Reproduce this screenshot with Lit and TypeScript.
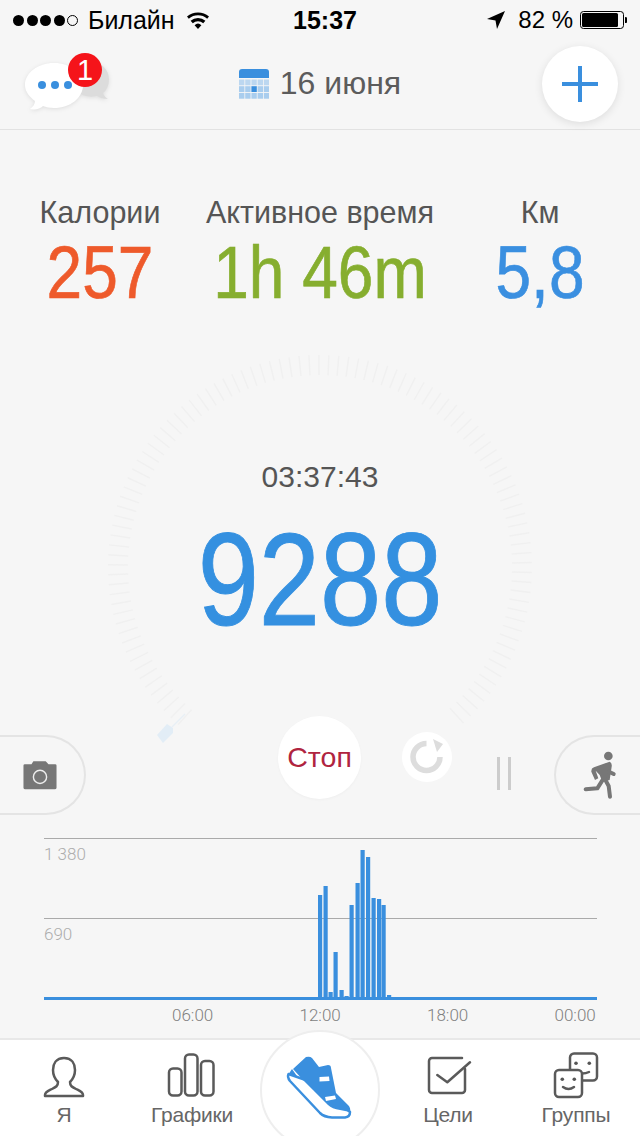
import { LitElement, html, css, svg } from "lit";
import { customElement } from "lit/decorators.js";

const BAR_TOPS = [895, 886, 992, 952, 990, 996, 905, 883, 850, 857, 898, 899, 905, 995];
const BAR_X = [318, 323.5, 328.5, 333.5, 339.5, 344.5, 349.5, 355.5, 360.5, 366, 371.5, 377, 381.5, 387];

const ticks = () => {
  const out = [];
  for (let a = -138; a <= 138; a += 2.7) {
    const r = (a * Math.PI) / 180;
    const s = Math.sin(r), c = Math.cos(r);
    out.push(svg`<line x1=${220 + 192 * s} y1=${220 - 192 * c} x2=${220 + 212 * s} y2=${220 - 212 * c}></line>`);
  }
  return out;
};

@customElement("app-root")
export class AppRoot extends LitElement {
  static styles = css`
    :host { display: block; width: 640px; height: 1136px; overflow: hidden; background: #f6f6f6; font-family: "Liberation Sans", Arial, sans-serif; color: #555; }
    .screen { display: flex; flex-direction: column; height: 1136px; }
    svg { display: block; }

    .status { display: grid; grid-template-columns: 293px auto 1fr; align-items: center; height: 40px; color: #000; font-size: 25px; }
    .st-left { display: flex; align-items: center; padding-left: 13px; }
    .dots { display: flex; gap: 2.5px; margin-right: 10px; }
    .dot { width: 11px; height: 11px; border-radius: 50%; background: #000; box-sizing: border-box; }
    .dot.off { background: none; border: 1px solid #000; }
    .wifi { margin-left: 12px; }
    .time { font-weight: 700; }
    .st-right { display: flex; align-items: center; justify-content: flex-end; padding-right: 13px; }
    .pct { margin: 0 7px 0 13px; font-size: 24px; }

    .header { display: grid; grid-template-columns: 1fr auto 1fr; align-items: center; height: 90px; box-sizing: border-box; padding-bottom: 2px; border-bottom: 1px solid #e2e2e2; }
    .chat { position: relative; width: 90px; height: 64px; margin: 0 0 0 22px; }
    .badge { position: absolute; left: 46px; top: 1px; width: 34px; height: 34px; border-radius: 50%; background: #f5141a; color: #fff; font-size: 29px; line-height: 34px; text-align: center; font-weight: 300; }
    .date { display: flex; align-items: center; gap: 11px; font-size: 32px; color: #5c5c5c; }
    .plus { justify-self: end; margin-right: 22px; width: 76px; height: 76px; border-radius: 50%; background: #fff; box-shadow: 0 2px 8px rgba(0,0,0,.1); display: flex; align-items: center; justify-content: center; }

    .stats { display: grid; grid-template-columns: 200px 240px 200px; height: 200px; padding-top: 65px; box-sizing: border-box; text-align: center; }
    .label { font-size: 30.5px; line-height: 34px; color: #555; }
    .value { font-size: 64px; line-height: 76px; height: 76px; margin-top: 5px; transform: scaleY(1.16); -webkit-text-stroke: 0.6px currentColor; }
    .red { color: #ee5a2b; } .green { color: #86ae2f; } .blue { color: #3a8fe0; }

    .dial { position: relative; height: 386px; text-align: center; padding-top: 130px; box-sizing: border-box; }
    .ring { position: absolute; left: 100px; top: 17px; overflow: visible; }
    .ring line { stroke: #f0f0f0; stroke-width: 1.4; }
    .elapsed { position: relative; font-size: 30px; line-height: 34px; color: #555; }
    .count { position: relative; font-size: 110px; line-height: 120px; margin-top: 25px; color: #3490e0; transform: scaleY(1.2); -webkit-text-stroke: 0.8px currentColor; }

    .controls { position: relative; display: flex; align-items: flex-start; height: 99px; }
    .pill { width: 86px; height: 80px; margin-top: 19px; box-sizing: border-box; border: 2px solid #e4e4e4; background: #f6f6f6; display: flex; align-items: center; }
    .pill.l { border-left: 0; border-radius: 0 40px 40px 0; padding-left: 23px; }
    .pill.r { border-right: 0; border-radius: 40px 0 0 40px; margin-left: 43px; }
    .pill.r svg { margin-left: -2px; flex: none; }
    .stop { width: 84px; height: 83px; margin-left: 192px; border-radius: 50%; background: #fff; color: #b0243f; font-size: 28.5px; line-height: 83px; text-align: center; box-shadow: 0 1px 3px rgba(0,0,0,.03); }
    .reset { width: 50px; height: 50px; margin: 16px 0 0 41px; border-radius: 50%; background: #fff; }
    .pause { margin: 41px 0 0 45px; width: 14px; height: 33px; display: flex; justify-content: space-between; }
    .pause i { width: 3px; background: #ccc; }

    .chart { margin-top: 20px; }
    .y { font-family: Roboto, sans-serif; font-weight: 300; font-size: 17px; fill: #adadad; }
    .x { display: flex; height: 21px; padding-left: 172px; gap: 87.5px; font-family: Roboto, sans-serif; font-weight: 300; font-size: 17px; line-height: 21px; color: #7f7f7f; }
    .x span { width: 40px; text-align: center; white-space: nowrap; }

    .tabs { margin-top: auto; display: grid; grid-template-columns: repeat(5, 128px); height: 98px; box-sizing: border-box; border-top: 2px solid #e8e8e8; background: #fff; }
    .tab { display: flex; flex-direction: column; align-items: center; padding-top: 12px; font-size: 21px; letter-spacing: -0.2px; line-height: 26px; color: #666; }
    .tab svg { fill: none; stroke: #5a5a5a; stroke-width: 2.5; stroke-linejoin: round; stroke-linecap: round; }
    .run { justify-self: center; width: 120px; height: 120px; margin-top: -10px; box-sizing: border-box; border: 2px solid #eee; border-radius: 50%; background: #fff; position: relative; }
    .run svg { margin: -2px; }
  `;

  render() {
    return html`<div class="screen">
      <div class="status">
        <div class="st-left">
          <div class="dots"><i class="dot"></i><i class="dot"></i><i class="dot"></i><i class="dot"></i><i class="dot off"></i></div>
          <span>Билайн</span>
          <svg class="wifi" width="22" height="17" viewBox="0 0 22 17"><path d="M11 17 7.6 13.2a5 5 0 0 1 6.8 0ZM5.8 11.2 3.6 8.8a11 11 0 0 1 14.8 0l-2.2 2.4a8 8 0 0 0-10.4 0ZM1.8 6.8 0 4.6a16.5 16.5 0 0 1 22 0l-1.8 2.2a14 14 0 0 0-18.4 0Z" fill="#000"/></svg>
        </div>
        <div class="time">15:37</div>
        <div class="st-right">
          <svg width="18" height="18" viewBox="0 0 18 18"><path d="M18 0 0 8l8.500 1.500L10 18Z" fill="#000"/></svg>
          <span class="pct">82 %</span>
          <svg width="47" height="18" viewBox="0 0 47 18"><rect x=".5" y=".5" width="43" height="17" rx="3" fill="none" stroke="#000"/><rect x="2" y="2" width="36" height="14" rx="1.500" fill="#000"/><path d="M45 6a3 3 0 0 1 0 6Z" fill="#000"/></svg>
        </div>
      </div>

      <div class="header">
        <div class="chat">
          <svg width="90" height="64" viewBox="0 0 90 64" style="filter:drop-shadow(0 1px 2px rgba(0,0,0,.1))">
            <path d="M62 10c14-3 25 6 25 17 0 6-2 11-6 14 1 3 3 5 5 6-5 0-8-1-11-3-14 3-26-5-26-17s5-15 13-17Z" fill="#dcdcdc"/>
            <path d="M32 11c16 0 29 10 29 22 0 13-13 23-29 23-4 0-8-1-11-2-3 3-8 4-13 3 3-2 5-5 5-8C8 45 3 40 3 33 3 21 16 11 32 11Z" fill="#fff"/>
            <g fill="#3a8fde"><circle cx="20" cy="33" r="4"/><circle cx="33" cy="33" r="4"/><circle cx="46" cy="33" r="4"/></g>
          </svg>
          <div class="badge">1</div>
        </div>
        <div class="date">
          <svg width="30" height="30" viewBox="0 0 30 30"><path d="M0 9V3a3 3 0 0 1 3-3h24a3 3 0 0 1 3 3v6Z" fill="#3a8fde"/>
            <g fill="#a9cdee">${[0, 1, 2, 3, 4].flatMap((c) => [0, 1, 2].map((r) => svg`<rect x=${c * 6.2} y=${10.500 + r * 6.7} width="5.400" height="5.800" fill=${c === 2 && r === 1 ? "#3a8fde" : r === 0 ? "#bcd7f0" : "#a9cdee"}></rect>`))}</g></svg>
          <span>16 июня</span>
        </div>
        <div class="plus"><svg width="36" height="36" viewBox="0 0 36 36"><path d="M18 0v36M0 18h36" stroke="#3a8fde" stroke-width="4"/></svg></div>
      </div>

      <div class="stats">
        <div><div class="label">Калории</div><div class="value red">257</div></div>
        <div><div class="label">Активное время</div><div class="value green">1h 46m</div></div>
        <div><div class="label">Км</div><div class="value blue">5,8</div></div>
      </div>

      <div class="dial">
        <svg class="ring" width="440" height="440" viewBox="0 0 440 440">${ticks()}
          <path d="M57 388 67 377l6 4v5L63 396Z" style="fill:#e2edf6"/>
          <line x1="72" y1="380" x2="85" y2="367" style="stroke:#e8eff5"></line>
        </svg>
        <div class="elapsed">03:37:43</div>
        <div class="count">9288</div>
      </div>

      <div class="controls">
        <div class="pill l"><svg width="34" height="31" viewBox="0 0 36 32"><path d="M2 4h7l2-3h13l3 3h7a1.500 1.500 0 0 1 1.500 1.500V29a1.500 1.500 0 0 1-1.500 1.500H2A1.500 1.500 0 0 1 .5 29V5.500A1.500 1.500 0 0 1 2 4Z" fill="#777"/><circle cx="18" cy="17.500" r="7" fill="none" stroke="#eee" stroke-width="1.500"/></svg></div>
        <div class="stop">Стоп</div>
        <div class="reset"><svg width="50" height="50" viewBox="0 0 50 50"><path d="M24.500 11.500a13.500 13.500 0 1 0 13.500 13.500" fill="none" stroke="#ddd" stroke-width="5.500"/><path d="M31 7l10 5-6 8Z" fill="#ddd"/></svg></div>
        <div class="pause"><i></i><i></i></div>
        <div class="pill r"><svg width="85" height="80" viewBox="45 15 255 240"><circle cx="208" cy="78" r="13" fill="#777"/><path d="M165 112 212 95Q220 100 218 110L212 150 190 155 182 135 170 122 178 145 168 150 157 125Q156 115 165 112Z" fill="#777"/><path d="M210 125l14 7M192 148l-17 27-35 3M198 148l11 20 4 32" fill="none" stroke="#777" stroke-width="12" stroke-linecap="round" stroke-linejoin="round"/></svg></div>
      </div>

      <div class="chart">
        <svg width="640" height="170" viewBox="0 835 640 170">
          <line x1="44" x2="597" y1="838.500" y2="838.500" stroke="#aaa"/>
          <line x1="44" x2="597" y1="918.500" y2="918.500" stroke="#aaa"/>
          <text class="y" x="44" y="860">1 380</text>
          <text class="y" x="44" y="940">690</text>
          <rect x="44" y="997" width="553" height="3" fill="#3a8fde"/>
          ${BAR_TOPS.map((t, i) => svg`<rect x=${BAR_X[i]} y=${t} width="4.200" height=${998 - t} fill="#3a8fde"></rect>`)}
        </svg>
        <div class="x"><span>06:00</span><span>12:00</span><span>18:00</span><span>00:00</span></div>
      </div>

      <div class="tabs">
        <div class="tab"><svg width="60" height="50" viewBox="0 0 60 50"><path d="M30 6C22 6 19 12 19 18c0 6 3 10 5 12 0 4-2 5-6 7-4 2-7 3-7 6v1h38v-1c0-3-3-4-7-6-4-2-6-3-6-7 2-2 5-6 5-12 0-6-3-12-11-12Z"/></svg>Я</div>
        <div class="tab"><svg width="60" height="50" viewBox="0 0 60 50"><rect x="7" y="16.500" width="12.500" height="27" rx="4"/><rect x="23" y="2.500" width="12.500" height="41" rx="4"/><rect x="39" y="9" width="12.500" height="34.500" rx="4"/></svg>Графики</div>
        <div class="run"><svg width="120" height="106" viewBox="0 0 120 106">
          <path d="M28 45 32 39 63 83 77 87 88 86 90 82 76 84 63 80Z" fill="#3a8fde"/>
          <path d="M28.500 44Q27 47 30 51L60 83Q64 87 72 87.500H85Q90 87 90 82L60 55Z" fill="#fff" stroke="#3a8fde" stroke-width="2.500" stroke-linejoin="round"/>
          <path d="M33 39 46 27Q50 26 52 28L59 37 68 35Q71 35 71 38L76 63 88 75Q91 78 90 82L80 80Q72 79 68 75L53 60 43 50Z" fill="#3a8fde"/>
          <path d="M59.500 47 69 46.500l.5 4.500-10 .5ZM65 67l10-1.500 1 3.500-10 2Z" fill="#fff"/>
        </svg></div>
        <div class="tab"><svg width="60" height="50" viewBox="0 0 60 50"><path d="M44 6H14a3 3 0 0 0-3 3v29a3 3 0 0 0 3 3h30a3 3 0 0 0 3-3V17"/><path d="M19.300 23l10 7.300L52 10.300"/></svg>Цели</div>
        <div class="tab"><svg width="60" height="50" viewBox="0 0 60 50"><rect x="24" y="1.500" width="27" height="27" rx="4"/><path d="M36 21.500q4 0 7-1.500"/><rect x="9" y="18" width="27" height="27" rx="4" fill="#fff"/><path d="M17 35q5.500 4 11 0"/><g style="fill:#555;stroke:none"><circle cx="30" cy="11.300" r="1.800"/><circle cx="43.300" cy="11.300" r="1.800"/><circle cx="16.300" cy="27.300" r="1.800"/><circle cx="28.300" cy="27.300" r="1.800"/></g></svg>Группы</div>
      </div>
    </div>`;
  }
}
